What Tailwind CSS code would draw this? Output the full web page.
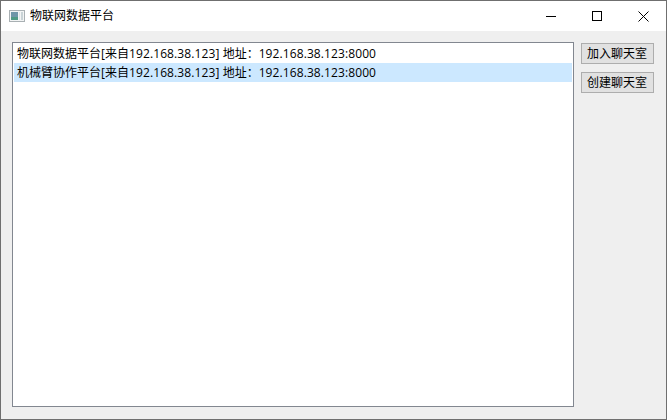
<!DOCTYPE html>
<html lang="zh-CN">
  <head>
    <meta charset="UTF-8" />
    <title>物联网数据平台</title>
    <script src="https://cdn.jsdelivr.net/npm/@tailwindcss/browser@4"></script>
  </head>
  <body class="w-[667px] h-[420px] overflow-hidden bg-[#efefef] font-['Open_Sans','Noto_Sans_CJK_SC',sans-serif] text-[12px] text-black">
    <div class="flex flex-col h-full border border-[#6f6f6f]">
      <!-- title bar -->
      <div class="flex items-center h-[30px] bg-white shrink-0">
        <svg class="ml-[8px] w-4 h-3" viewBox="0 0 16 12">
          <rect x="0.5" y="0.5" width="15" height="11" fill="#f2f4f4" stroke="#a9b0b3" />
          <rect x="2" y="2" width="7" height="8" fill="#6f96a8" />
          <rect x="2" y="7" width="7" height="3" fill="#4f9a84" />
          <rect x="10" y="2" width="1" height="8" fill="#dfe5e6" />
          <rect x="12" y="2" width="2" height="8" fill="#c9d3d6" />
        </svg>
        <span class="ml-[5px] leading-none">物联网数据平台</span>
        <div class="ml-auto flex h-full">
          <div class="w-[46px] flex items-center justify-center">
            <svg class="w-[10px] h-[10px]" viewBox="0 0 10 10"><path d="M0 5.5H10" stroke="#000" /></svg>
          </div>
          <div class="w-[46px] flex items-center justify-center">
            <svg class="w-[10px] h-[10px]" viewBox="0 0 10 10"><rect x="0.5" y="0.5" width="9" height="9" fill="none" stroke="#000" /></svg>
          </div>
          <div class="w-[46px] flex items-center justify-center">
            <svg class="w-[11px] h-[11px]" viewBox="0 0 11 11"><path d="M0.5 0.5L10.5 10.5M10.5 0.5L0.5 10.5" stroke="#000" /></svg>
          </div>
        </div>
      </div>
      <!-- content -->
      <div class="flex flex-1 pt-[11px] pl-[11px] gap-[7px]">
        <div class="w-[562px] h-[365px] bg-white border border-[#828790] p-px">
          <div class="h-[19px] pl-[3px] flex items-center whitespace-pre">物联网数据平台<span class="tracking-[0.08px]">[</span>来自<span class="tracking-[0.1px]">192.168.38.123] </span>地址：<span class="tracking-[0.1px]">192.168.38.123:8000</span></div>
          <div class="h-[19px] pl-[3px] flex items-center whitespace-pre bg-[#cce8ff]">机械臂协作平台<span class="tracking-[0.08px]">[</span>来自<span class="tracking-[0.1px]">192.168.38.123] </span>地址：<span class="tracking-[0.1px]">192.168.38.123:8000</span></div>
        </div>
        <div class="flex flex-col gap-2 pt-px">
          <button class="w-[73px] h-[21px] bg-[#e1e1e1] border border-[#adadad] leading-none pr-px">加入聊天室</button>
          <button class="w-[73px] h-[21px] bg-[#e1e1e1] border border-[#adadad] leading-none pr-px">创建聊天室</button>
        </div>
      </div>
    </div>
  </body>
</html>
